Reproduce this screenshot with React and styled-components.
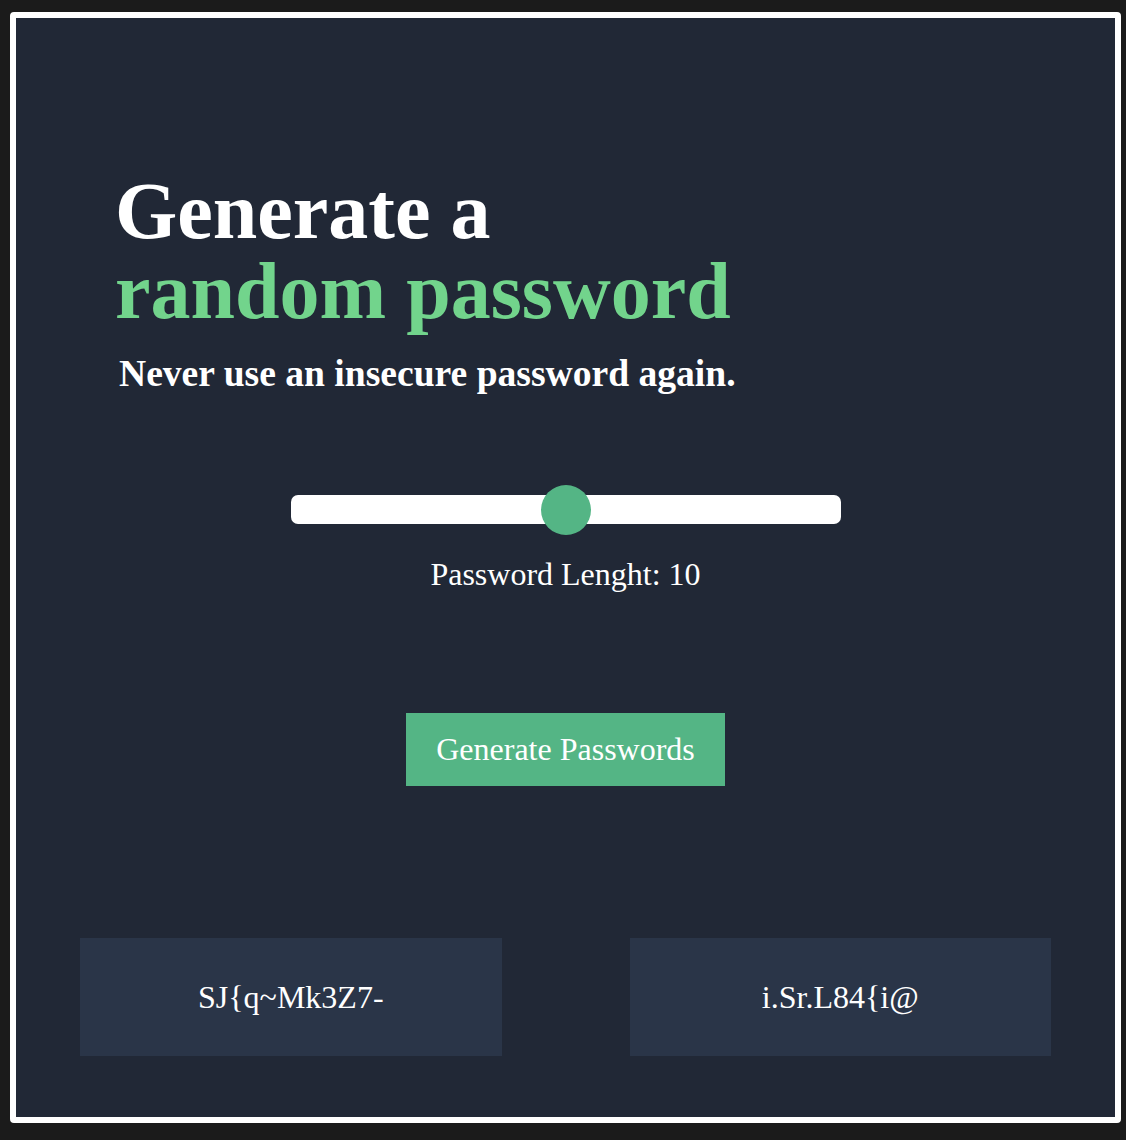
import React, { useState } from "react";
import styled, { createGlobalStyle } from "styled-components";

const GlobalStyle = createGlobalStyle`
  html, body {
    margin: 0;
    background: #1b1b1b;
    font-family: "Liberation Serif", "Times New Roman", serif;
  }
  * {
    box-sizing: border-box;
  }
`;

const Frame = styled.main`
  margin: 12px 5px 17px 10px;
  height: 1111px;
  border: 6px solid #ffffff;
  border-radius: 4px;
  background: #212836;
  color: #ffffff;
  display: flex;
  flex-direction: column;
`;

const Hero = styled.header`
  margin-top: 153px;
  padding-left: 99px;
`;

const Title = styled.h1`
  margin: 0;
  font-size: 80px;
  line-height: 1;
  font-weight: 700;
  span {
    display: block;
    color: #72d48c;
  }
`;

const Subtitle = styled.p`
  margin: 21px 0 0 4px;
  font-size: 37.6px;
  line-height: 1.15;
  font-weight: 700;
`;

const SliderWrap = styled.section`
  margin-top: 100px;
  display: flex;
  flex-direction: column;
  align-items: center;
`;

const Range = styled.input`
  -webkit-appearance: none;
  appearance: none;
  display: block;
  width: 550px;
  height: 29px;
  margin: 0;
  background: transparent;
  cursor: pointer;

  &::-webkit-slider-runnable-track {
    height: 29px;
    background: #ffffff;
    border-radius: 7px;
  }

  &::-webkit-slider-thumb {
    -webkit-appearance: none;
    appearance: none;
    width: 50px;
    height: 50px;
    margin-top: -10.5px;
    border-radius: 50%;
    background: #54b585;
    border: none;
  }

  &:focus {
    outline: none;
  }
`;

const Label = styled.p`
  margin: 32px 0 0;
  font-size: 32px;
  line-height: 1.15;
`;

const GenerateButton = styled.button`
  align-self: center;
  margin-top: 120px;
  padding: 18px 30px;
  border: none;
  background: #54b585;
  color: #ffffff;
  font-family: inherit;
  font-size: 32px;
  line-height: 37px;
  cursor: pointer;
`;

const Results = styled.section`
  margin-top: 152px;
  padding: 0 64px;
  display: grid;
  grid-template-columns: 1fr 1fr;
  column-gap: 128px;
`;

const PasswordCard = styled.div`
  height: 118px;
  display: flex;
  align-items: center;
  justify-content: center;
  background: #2a3548;
  font-size: 32px;
`;

const passwords = ["SJ{q~Mk3Z7-", "i.Sr.L84{i@"];

export default function App() {
  const [length, setLength] = useState(10);

  return (
    <>
      <GlobalStyle />
      <Frame>
        <Hero>
          <Title>
            Generate a<span>random password</span>
          </Title>
          <Subtitle>Never use an insecure password again.</Subtitle>
        </Hero>

        <SliderWrap>
          <Range
            type="range"
            min="5"
            max="15"
            value={length}
            onChange={(e) => setLength(Number(e.target.value))}
          />
          <Label>Password Lenght: {length}</Label>
        </SliderWrap>

        <GenerateButton>Generate Passwords</GenerateButton>

        <Results>
          {passwords.map((p) => (
            <PasswordCard key={p}>{p}</PasswordCard>
          ))}
        </Results>
      </Frame>
    </>
  );
}
